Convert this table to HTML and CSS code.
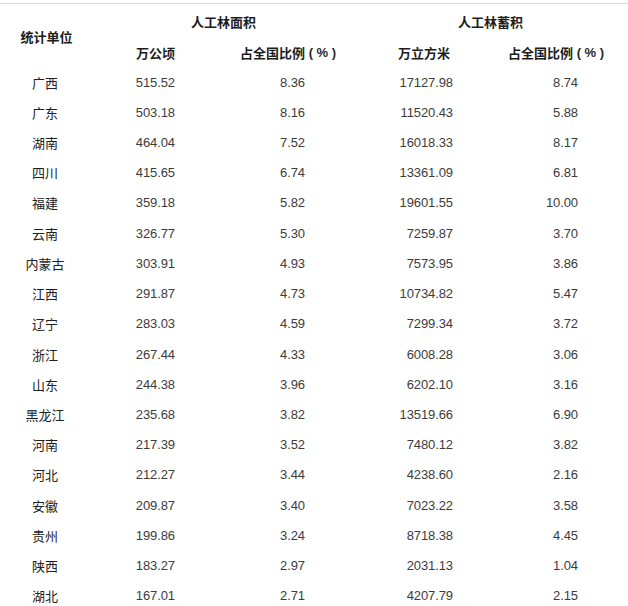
FILE: index.html
```html
<!DOCTYPE html>
<html lang="zh-CN">
<head>
<meta charset="utf-8">
<title>人工林面积与蓄积</title>
<link rel="stylesheet" href="styles.css">
</head>
<body>
<div class="page">
  <div class="table">
    <div class="cell h-unit">统计单位</div>
    <div class="cell h-area">人工林面积</div>
    <div class="cell h-stock">人工林蓄积</div>
    <div class="cell h2 c2">万公顷</div>
    <div class="cell h2 h-pct3">占全国比例<span class="pct">&nbsp;(&nbsp;%&nbsp;)</span></div>
    <div class="cell h2 c4 h-m3">万立方米</div>
    <div class="cell h2 h-pct5">占全国比例<span class="pct">&nbsp;(&nbsp;%&nbsp;)</span></div>

    <div class="cell name">广西</div><div class="cell num c2">515.52</div><div class="cell num c3">8.36</div><div class="cell num c4">17127.98</div><div class="cell num c5">8.74</div>
    <div class="cell name">广东</div><div class="cell num c2">503.18</div><div class="cell num c3">8.16</div><div class="cell num c4">11520.43</div><div class="cell num c5">5.88</div>
    <div class="cell name">湖南</div><div class="cell num c2">464.04</div><div class="cell num c3">7.52</div><div class="cell num c4">16018.33</div><div class="cell num c5">8.17</div>
    <div class="cell name">四川</div><div class="cell num c2">415.65</div><div class="cell num c3">6.74</div><div class="cell num c4">13361.09</div><div class="cell num c5">6.81</div>
    <div class="cell name">福建</div><div class="cell num c2">359.18</div><div class="cell num c3">5.82</div><div class="cell num c4">19601.55</div><div class="cell num c5">10.00</div>
    <div class="cell name">云南</div><div class="cell num c2">326.77</div><div class="cell num c3">5.30</div><div class="cell num c4">7259.87</div><div class="cell num c5">3.70</div>
    <div class="cell name">内蒙古</div><div class="cell num c2">303.91</div><div class="cell num c3">4.93</div><div class="cell num c4">7573.95</div><div class="cell num c5">3.86</div>
    <div class="cell name">江西</div><div class="cell num c2">291.87</div><div class="cell num c3">4.73</div><div class="cell num c4">10734.82</div><div class="cell num c5">5.47</div>
    <div class="cell name">辽宁</div><div class="cell num c2">283.03</div><div class="cell num c3">4.59</div><div class="cell num c4">7299.34</div><div class="cell num c5">3.72</div>
    <div class="cell name">浙江</div><div class="cell num c2">267.44</div><div class="cell num c3">4.33</div><div class="cell num c4">6008.28</div><div class="cell num c5">3.06</div>
    <div class="cell name">山东</div><div class="cell num c2">244.38</div><div class="cell num c3">3.96</div><div class="cell num c4">6202.10</div><div class="cell num c5">3.16</div>
    <div class="cell name">黑龙江</div><div class="cell num c2">235.68</div><div class="cell num c3">3.82</div><div class="cell num c4">13519.66</div><div class="cell num c5">6.90</div>
    <div class="cell name">河南</div><div class="cell num c2">217.39</div><div class="cell num c3">3.52</div><div class="cell num c4">7480.12</div><div class="cell num c5">3.82</div>
    <div class="cell name">河北</div><div class="cell num c2">212.27</div><div class="cell num c3">3.44</div><div class="cell num c4">4238.60</div><div class="cell num c5">2.16</div>
    <div class="cell name">安徽</div><div class="cell num c2">209.87</div><div class="cell num c3">3.40</div><div class="cell num c4">7023.22</div><div class="cell num c5">3.58</div>
    <div class="cell name">贵州</div><div class="cell num c2">199.86</div><div class="cell num c3">3.24</div><div class="cell num c4">8718.38</div><div class="cell num c5">4.45</div>
    <div class="cell name">陕西</div><div class="cell num c2">183.27</div><div class="cell num c3">2.97</div><div class="cell num c4">2031.13</div><div class="cell num c5">1.04</div>
    <div class="cell name">湖北</div><div class="cell num c2">167.01</div><div class="cell num c3">2.71</div><div class="cell num c4">4207.79</div><div class="cell num c5">2.15</div>
  </div>
  <div class="bottom-line"></div>
</div>
</body>
</html>
```

FILE: styles.css
```css
html, body {
  margin: 0;
  padding: 0;
  background: #ffffff;
}

.page {
  width: 628px;
  height: 606px;
  padding-top: 3px;
  box-sizing: border-box;
  overflow: hidden;
}

.table {
  border-top: 1px solid #d6d6d6;
  padding-top: 2px;
  display: grid;
  grid-template-columns: 90px 85px 130px 148px 125px 1fr;
  grid-template-rows: 30px 31px repeat(18, 30.22px);
  font-family: "Liberation Sans", "Noto Sans CJK SC", sans-serif;
  font-size: 13px;
  color: #3c3c3c;
}

.cell {
  display: flex;
  align-items: center;
  white-space: nowrap;
}

.h-unit,
.h-area,
.h-stock,
.h2 {
  font-family: "Noto Sans CJK SC", sans-serif;
  font-weight: bold;
  color: #1c1c1c;
}

.pct {
  font-family: "Liberation Sans", sans-serif;
  font-weight: bold;
  color: #2a2a2a;
  white-space: pre;
}

.h-unit {
  grid-column: 1;
  grid-row: 1 / 3;
  justify-content: center;
  padding-left: 3px;
  padding-bottom: 1px;
}

.h-area {
  grid-column: 2 / 4;
  grid-row: 1;
  padding-left: 101px;
  padding-top: 1px;
}

.h-stock {
  grid-column: 4 / 6;
  grid-row: 1;
  padding-left: 153px;
  padding-top: 1px;
}

.h2 {
  grid-row: 2;
  padding-top: 2px;
}

.h-pct3 {
  grid-column: 3;
  padding-left: 65px;
}

.h-m3 {
  padding-right: 3px;
}

.h-pct5 {
  grid-column: 5;
  padding-left: 55px;
}

.name {
  grid-column: 1;
  justify-content: center;
  font-family: "Noto Sans CJK SC", sans-serif;
  color: #202020;
}

.c2 { grid-column: 2; justify-content: flex-end; }
.c3 { grid-column: 3; justify-content: flex-end; }
.c4 { grid-column: 4; justify-content: flex-end; }
.c5 { grid-column: 5; justify-content: flex-end; }

.num {
  letter-spacing: -0.1px;
}

.bottom-line {
  height: 1px;
  margin-top: 2px;
  background: linear-gradient(to right, #e4e4e4 0, #cfcfcf 30%, #d9d9d9 55%, #f4f4f4 70%, #dcdcdc 85%, #d0d0d0 100%);
}
```
